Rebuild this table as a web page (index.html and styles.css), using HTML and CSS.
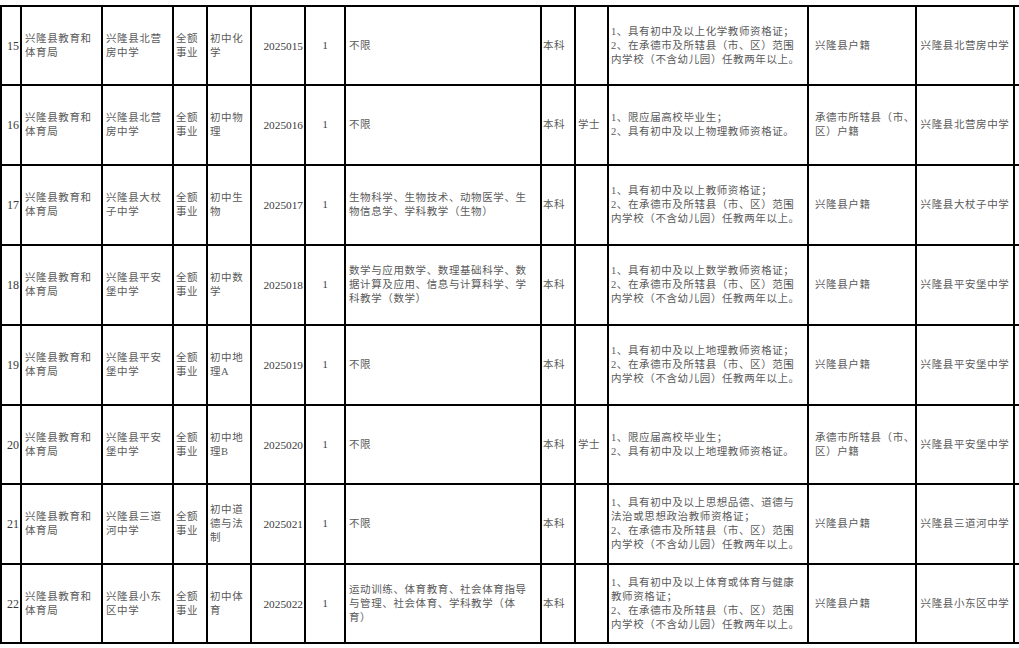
FILE: index.html
```html
<!DOCTYPE html>
<html lang="zh-CN">
<head>
<meta charset="utf-8">
<title>兴隆县教师招聘岗位表</title>
<link rel="stylesheet" href="styles.css">
</head>
<body>
<table class="posts">
  <colgroup>
    <col class="c-n"><col class="c-unit"><col class="c-school"><col class="c-type"><col class="c-post">
    <col class="c-code"><col class="c-cnt"><col class="c-major"><col class="c-edu"><col class="c-deg">
    <col class="c-req"><col class="c-hk"><col class="c-place"><col class="c-tail">
  </colgroup>
  <tbody>
    <tr class="r79">
      <td class="n">15</td><td class="unit">兴隆县教育和<br>体育局</td><td class="school">兴隆县北营<br>房中学</td><td class="type">全额<br>事业</td><td class="post">初中化<br>学</td>
      <td class="code">2025015</td><td class="cnt">1</td><td class="major">不限</td><td class="edu">本科</td><td class="deg"></td>
      <td class="req">1、具有初中及以上化学教师资格证；<br>2、在承德市及所辖县（市、区）范围<br>内学校（不含幼儿园）任教两年以上。</td><td class="hk">兴隆县户籍</td><td class="place">兴隆县北营房中学</td><td class="tail"></td>
    </tr>
    <tr class="r80">
      <td class="n">16</td><td class="unit">兴隆县教育和<br>体育局</td><td class="school">兴隆县北营<br>房中学</td><td class="type">全额<br>事业</td><td class="post">初中物<br>理</td>
      <td class="code">2025016</td><td class="cnt">1</td><td class="major">不限</td><td class="edu">本科</td><td class="deg">学士</td>
      <td class="req">1、限应届高校毕业生；<br>2、具有初中及以上物理教师资格证。</td><td class="hk">承德市所辖县（市、<br>区）户籍</td><td class="place">兴隆县北营房中学</td><td class="tail"></td>
    </tr>
    <tr class="r80">
      <td class="n">17</td><td class="unit">兴隆县教育和<br>体育局</td><td class="school">兴隆县大杖<br>子中学</td><td class="type">全额<br>事业</td><td class="post">初中生<br>物</td>
      <td class="code">2025017</td><td class="cnt">1</td><td class="major">生物科学、生物技术、动物医学、生<br>物信息学、学科教学（生物）</td><td class="edu">本科</td><td class="deg"></td>
      <td class="req">1、具有初中及以上教师资格证；<br>2、在承德市及所辖县（市、区）范围<br>内学校（不含幼儿园）任教两年以上。</td><td class="hk">兴隆县户籍</td><td class="place">兴隆县大杖子中学</td><td class="tail"></td>
    </tr>
    <tr class="r80">
      <td class="n">18</td><td class="unit">兴隆县教育和<br>体育局</td><td class="school">兴隆县平安<br>堡中学</td><td class="type">全额<br>事业</td><td class="post">初中数<br>学</td>
      <td class="code">2025018</td><td class="cnt">1</td><td class="major">数学与应用数学、数理基础科学、数<br>据计算及应用、信息与计算科学、学<br>科教学（数学）</td><td class="edu">本科</td><td class="deg"></td>
      <td class="req">1、具有初中及以上数学教师资格证；<br>2、在承德市及所辖县（市、区）范围<br>内学校（不含幼儿园）任教两年以上。</td><td class="hk">兴隆县户籍</td><td class="place">兴隆县平安堡中学</td><td class="tail"></td>
    </tr>
    <tr class="r80">
      <td class="n">19</td><td class="unit">兴隆县教育和<br>体育局</td><td class="school">兴隆县平安<br>堡中学</td><td class="type">全额<br>事业</td><td class="post">初中地<br>理A</td>
      <td class="code">2025019</td><td class="cnt">1</td><td class="major">不限</td><td class="edu">本科</td><td class="deg"></td>
      <td class="req">1、具有初中及以上地理教师资格证；<br>2、在承德市及所辖县（市、区）范围<br>内学校（不含幼儿园）任教两年以上。</td><td class="hk">兴隆县户籍</td><td class="place">兴隆县平安堡中学</td><td class="tail"></td>
    </tr>
    <tr class="r79">
      <td class="n">20</td><td class="unit">兴隆县教育和<br>体育局</td><td class="school">兴隆县平安<br>堡中学</td><td class="type">全额<br>事业</td><td class="post">初中地<br>理B</td>
      <td class="code">2025020</td><td class="cnt">1</td><td class="major">不限</td><td class="edu">本科</td><td class="deg">学士</td>
      <td class="req">1、限应届高校毕业生；<br>2、具有初中及以上地理教师资格证。</td><td class="hk">承德市所辖县（市、<br>区）户籍</td><td class="place">兴隆县平安堡中学</td><td class="tail"></td>
    </tr>
    <tr class="r80">
      <td class="n">21</td><td class="unit">兴隆县教育和<br>体育局</td><td class="school">兴隆县三道<br>河中学</td><td class="type">全额<br>事业</td><td class="post">初中道<br>德与法<br>制</td>
      <td class="code">2025021</td><td class="cnt">1</td><td class="major">不限</td><td class="edu">本科</td><td class="deg"></td>
      <td class="req">1、具有初中及以上思想品德、道德与<br>法治或思想政治教师资格证；<br>2、在承德市及所辖县（市、区）范围<br>内学校（不含幼儿园）任教两年以上。</td><td class="hk">兴隆县户籍</td><td class="place">兴隆县三道河中学</td><td class="tail"></td>
    </tr>
    <tr class="r79">
      <td class="n">22</td><td class="unit">兴隆县教育和<br>体育局</td><td class="school">兴隆县小东<br>区中学</td><td class="type">全额<br>事业</td><td class="post">初中体<br>育</td>
      <td class="code">2025022</td><td class="cnt">1</td><td class="major">运动训练、体育教育、社会体育指导<br>与管理、社会体育、学科教学（体<br>育）</td><td class="edu">本科</td><td class="deg"></td>
      <td class="req">1、具有初中及以上体育或体育与健康<br>教师资格证；<br>2、在承德市及所辖县（市、区）范围<br>内学校（不含幼儿园）任教两年以上。</td><td class="hk">兴隆县户籍</td><td class="place">兴隆县小东区中学</td><td class="tail"></td>
    </tr>
  </tbody>
</table>
</body>
</html>
```
FILE: styles.css
```css
html, body {
  margin: 0;
  padding: 0;
  background: #ffffff;
  overflow: hidden;
}

body {
  padding-top: 5px;
}

.posts {
  table-layout: fixed;
  border-collapse: separate;
  border-spacing: 0;
  width: 1075px;
  border-left: 2px solid #000;
  border-top: 2px solid #000;
  font-family: "Liberation Serif", "Noto Sans CJK SC", serif;
  font-size: 10.5px;
  letter-spacing: 0.6px;
  line-height: 14px;
  color: #5a5a5a;
}

.c-n { width: 20px; }
.c-unit { width: 81px; }
.c-school { width: 71px; }
.c-type { width: 34px; }
.c-post { width: 44px; }
.c-code { width: 54px; }
.c-cnt { width: 40px; }
.c-major { width: 196px; }
.c-edu { width: 34px; }
.c-deg { width: 33px; }
.c-req { width: 200px; }
.c-hk { width: 108px; }
.c-place { width: 98px; }
.c-tail { width: 62px; }

.posts td {
  box-sizing: border-box;
  border-right: 2px solid #000;
  border-bottom: 2px solid #000;
  padding: 0 0 0 3px;
  vertical-align: middle;
  text-align: left;
  white-space: nowrap;
  overflow: hidden;
}

.r80 { height: 80px; }
.r79 { height: 79px; }

.posts td.n {
  text-align: right;
  padding: 0 1px 0 0;
  font-size: 12px;
  letter-spacing: 0;
  color: #3a3a3a;
}

.posts td.type,
.posts td.post,
.posts td.deg,
.posts td.req {
  padding-left: 2px;
}

.posts td.edu {
  padding-left: 1px;
}

.posts td.code {
  text-align: right;
  padding: 0 1px 0 0;
  font-size: 11.3px;
  letter-spacing: 0;
  color: #3a3a3a;
}

.posts td.cnt {
  text-align: center;
  padding: 0;
  letter-spacing: 0;
  color: #3a3a3a;
}

.posts td.hk {
  padding-left: 6px;
}

.posts td.place {
  text-align: center;
  padding: 0;
}

.posts td.tail {
  padding-left: 1px;
  border-right: none;
}
```
